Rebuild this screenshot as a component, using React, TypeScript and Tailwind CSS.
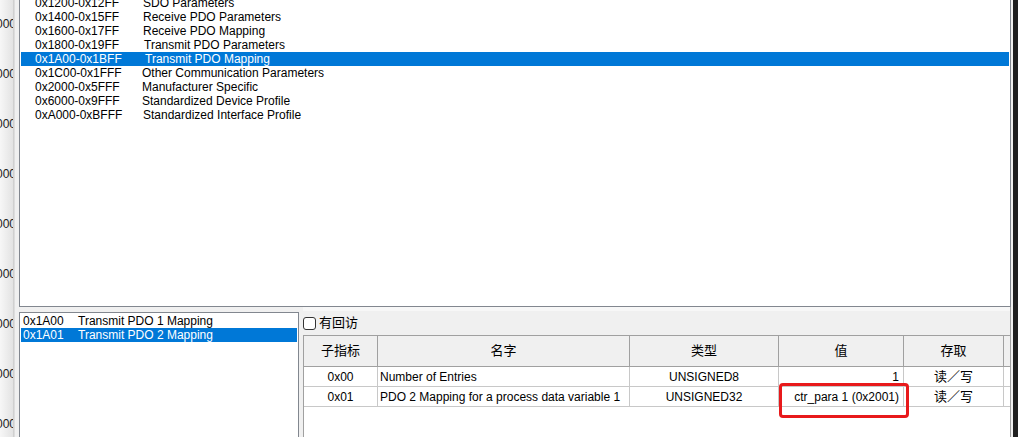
const ranges = [
  { code: "0x1200-0x12FF", name: "SDO Parameters", w: "w-[108px]" },
  { code: "0x1400-0x15FF", name: "Receive PDO Parameters", w: "w-[108px]" },
  { code: "0x1600-0x17FF", name: "Receive PDO Mapping", w: "w-[108px]" },
  { code: "0x1800-0x19FF", name: "Transmit PDO Parameters", w: "w-[109px]" },
  { code: "0x1A00-0x1BFF", name: "Transmit PDO Mapping", w: "w-[110px]", selected: true },
  { code: "0x1C00-0x1FFF", name: "Other Communication Parameters", w: "w-[107px]" },
  { code: "0x2000-0x5FFF", name: "Manufacturer Specific", w: "w-[107px]" },
  { code: "0x6000-0x9FFF", name: "Standardized Device Profile", w: "w-[107px]" },
  { code: "0xA000-0xBFFF", name: "Standardized Interface Profile", w: "w-[108px]" },
];

const objects = [
  { index: "0x1A00", name: "Transmit PDO 1 Mapping" },
  { index: "0x1A01", name: "Transmit PDO 2 Mapping", selected: true },
];

const entries = [
  { sub: "0x00", name: "Number of Entries", type: "UNSIGNED8", value: "1", access: "读／写" },
  {
    sub: "0x01",
    name: "PDO 2 Mapping for a process data variable 1",
    type: "UNSIGNED32",
    value: "ctr_para 1 (0x2001)",
    access: "读／写",
  },
];

const cols = "grid grid-cols-[74px_252px_149px_125px_100px_1fr]";

const App = () => {
  return (
    <div className="relative flex w-[1018px] h-[437px] overflow-hidden bg-[#f0f0f0] text-[12px] text-black font-['Liberation_Sans','Noto_Sans_CJK_SC',sans-serif]">
      {/* clipped axis strip on the far left */}
      <div className="flex w-[15px] shrink-0">
        <div className="flex flex-col w-[13px] overflow-hidden bg-gradient-to-r from-[#f7f7f7] to-[#e3e3e3] -mt-[1px]">
          {Array.from({ length: 9 }).map((_, i) => (
            <div key={i} className="h-[50px] shrink-0 flex items-center">
              <div className="w-[16px] shrink-0 flex justify-end text-[#222]">
                <span className="whitespace-nowrap">0000</span>
              </div>
            </div>
          ))}
        </div>
        <div className="w-[2px] bg-gradient-to-r from-[#c9c9c9] to-[#e4e4e4]" />
      </div>

      <div className="flex flex-col w-[998px] shrink-0 pl-[4px] pr-[2px]">
        {/* object range list */}
        <div className="h-[307px] shrink-0 overflow-hidden bg-white border-x border-b border-[#82878f] px-[1px]">
          <div className="-mt-[4px]">
            {ranges.map((r) => (
              <div
                key={r.code}
                className={`flex h-[14px] leading-[14px] pl-[14px] whitespace-nowrap ${
                  r.selected ? "bg-[#0078d7] text-white" : ""
                }`}
              >
                <span className={`${r.w} shrink-0`}>{r.code}</span>
                <span>{r.name}</span>
              </div>
            ))}
          </div>
        </div>

        <div className="flex flex-1 min-h-0">
          {/* object list */}
          <div className="w-[280px] shrink-0 mt-[5px] bg-white border-x border-t border-[#82878f] pt-[1px] px-[1px]">
            {objects.map((o) => (
              <div
                key={o.index}
                className={`flex h-[14px] leading-[14px] pl-[2px] whitespace-nowrap ${
                  o.selected ? "bg-[#0078d7] text-white" : ""
                }`}
              >
                <span className="w-[55px] shrink-0">{o.index}</span>
                <span>{o.name}</span>
              </div>
            ))}
          </div>

          {/* entry table */}
          <div className="flex flex-col flex-1 pl-[4px] border-r border-[#a0a0a0]">
            <div className="h-[4px] shrink-0 bg-[#f7f7f7]" />
            <div className="h-[24px] shrink-0 flex items-center gap-[3px]">
              <span className="w-[13px] h-[13px] rounded-[3px] border border-[#333] bg-white" />
              <span className="text-[13px] leading-none -mt-[1px]">有回访</span>
            </div>
            <div className="flex-1 bg-white border-l border-[#a0a0a0]">
              <div className={`${cols} h-[32px] bg-[#f0f0f0] border-y border-[#a0a0a0] text-[13px]`}>
                {["子指标", "名字", "类型", "值", "存取", ""].map((h, i) => (
                  <div key={i} className={`flex items-center justify-center ${i < 5 ? "border-r border-[#a0a0a0]" : ""}`}>
                    {h}
                  </div>
                ))}
              </div>
              {entries.map((e) => (
                <div key={e.sub} className={`${cols} h-[20px] border-b border-[#c8c8c8] whitespace-nowrap`}>
                  <div className="flex items-center justify-center border-r border-[#c8c8c8]">{e.sub}</div>
                  <div className="flex items-center pl-[2px] border-r border-[#c8c8c8]">{e.name}</div>
                  <div className="flex items-center justify-center border-r border-[#c8c8c8]">{e.type}</div>
                  <div className="flex items-center justify-end pr-[4px] border-r border-[#c8c8c8]">{e.value}</div>
                  <div className="flex items-center justify-center text-[13px] border-r border-[#c8c8c8]">{e.access}</div>
                  <div />
                </div>
              ))}
            </div>
          </div>
        </div>
      </div>

      <div className="flex-1 bg-[#1f1f1f]" />

      {/* red highlight annotation */}
      <div className="absolute left-[779px] top-[383px] w-[130px] h-[35px] border-[3px] border-[#e8191b] rounded-[4px]" />
    </div>
  );
};

export default App;
